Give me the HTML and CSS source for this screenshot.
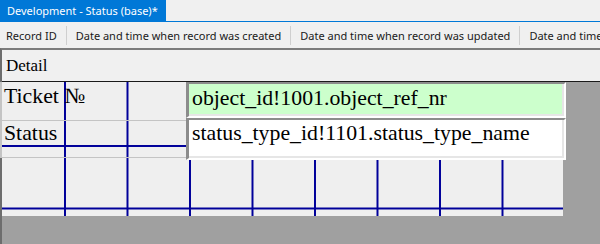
FILE: index.html
```html
<!DOCTYPE html>
<html lang="en">
<head>
    <meta charset="UTF-8">
    <meta name="viewport" content="width=device-width, initial-scale=1.0">
    <title>Development - Status (base)*</title>
    <link rel="stylesheet" href="styles.css">
</head>
<body>
    <div class="tabstrip">
        <div class="tab">Development - Status (base)*</div>
    </div>

    <div class="toolbar">
        <span class="col first">Record ID</span>
        <span class="sep"></span>
        <span class="col">Date and time when record was created</span>
        <span class="sep"></span>
        <span class="col">Date and time when record was updated</span>
        <span class="sep"></span>
        <span class="col">Date and time when record was deleted</span>
    </div>

    <div class="designer">
        <div class="band">Detail</div>

        <!-- form section with the layout grid -->
        <div class="section">
            <div class="label label-ticket">Ticket №</div>
            <div class="label label-status">Status</div>

            <div class="field field-ticket">object_id!1001.object_ref_nr</div>
            <div class="field field-status">status_type_id!1101.status_type_name</div>
        </div>
    </div>
</body>
</html>
```

FILE: styles.css
```css
body {
    margin: 0;
    background-color: #a0a0a0;
    overflow: hidden;
}

.tabstrip {
    height: 21px;
    background-color: #f0f0f0;
    border-bottom: 1px solid #0078d7;
}

.tab {
    width: 159px;
    height: 21px;
    padding-left: 7px;
    background-color: #0078d7;
    color: #fff;
    font-family: "Noto Sans", sans-serif;
    font-size: 11px;
    line-height: 21px;
    white-space: nowrap;
}

.toolbar {
    display: flex;
    align-items: center;
    height: 26px;
    padding-left: 6px;
    background-color: #f0f0f0;
    font-family: "Noto Sans", sans-serif;
    font-size: 11px;
    color: #1a1a1a;
    white-space: nowrap;
    overflow: hidden;
}

.col {
    padding: 0 9px;
}

.col.first {
    padding-left: 0;
}

.sep {
    flex: none;
    width: 1px;
    height: 19px;
    background-color: #cfcfcf;
}

.designer {
    height: 194px;
    border-top: 2px solid #7c7c7c;
    border-left: 2px solid #6d6d6d;
}

.band {
    height: 31px;
    padding-left: 4px;
    background-color: #f0f0f0;
    border-bottom: 1px solid #1a1a1a;
    font-family: "Liberation Serif", serif;
    font-size: 17px;
    line-height: 31px;
    color: #000;
}

.section {
    position: relative;
    z-index: 0;
    width: 561px;
    height: 134px;
    background-color: #efefef;
    font-family: "Liberation Serif", serif;
    font-size: 21.8px;
    color: #000;
}

/* grid lines, every 62.5px */
.section::before,
.section::after {
    content: "";
    position: absolute;
    z-index: 0;
    right: 0;
    bottom: 0;
}

.section::before {
    top: 0;
    left: 62px;
    background-image: linear-gradient(to right, #00009a 1.5px, transparent 1.5px);
    background-size: 62.5px 100%;
}

.section::after {
    top: 63px;
    left: 0;
    background-image: linear-gradient(to bottom, #00009a 1.5px, transparent 1.5px);
    background-size: 100% 62.5px;
}

.label {
    position: absolute;
    z-index: 1;
    left: -2px;
    width: 188px;
    padding-left: 2px;
    box-sizing: border-box;
    border-left: 2px solid #c4c4c4;
    border-bottom: 1px solid #c4c4c4;
    white-space: nowrap;
}

.label-ticket {
    top: 0;
    height: 39px;
    padding-top: 2px;
}

.label-status {
    top: 39px;
    height: 37px;
    padding-top: 0;
}

.field {
    position: absolute;
    z-index: 1;
    left: 184px;
    width: 380px;
    box-sizing: border-box;
    padding-left: 3px;
    border-style: solid;
    border-width: 2px 2px 2px 3px;
    border-color: #8c8c8c #fff #fff #8c8c8c;
    box-shadow: inset -2px -2px 0 #e6e6e6;
    white-space: nowrap;
    overflow: hidden;
}

.field-ticket {
    top: 0;
    height: 36px;
    padding-top: 2px;
    background-color: #ccffcc;
}

.field-status {
    top: 36px;
    height: 42px;
    padding-top: 1px;
    background-color: #fff;
}
```
